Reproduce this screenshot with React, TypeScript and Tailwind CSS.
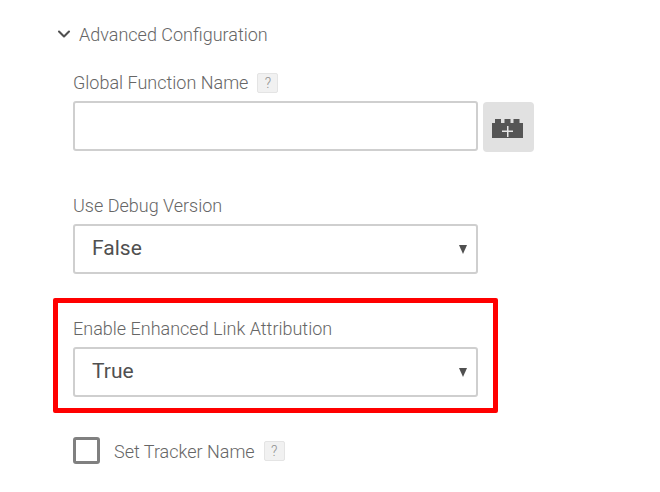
import { ChevronDown } from 'lucide-react';

const HelpBadge = () => (
  <span className="flex h-[20px] w-[21px] items-center justify-center rounded-[2px] border border-[#e4e4e4] bg-[#f1f1f1] text-[14px] font-light leading-none text-[#909090]">
    ?
  </span>
);

const SelectField = ({ label, value }: { label: string; value: string }) => (
  <div className="flex flex-col">
    <label className="h-[24px] pt-px text-[18px] font-light leading-[24px] text-[#666666]">{label}</label>
    <div className="mt-[7px] flex h-[50px] w-[405px] items-center justify-between rounded-[3px] border-2 border-[#cfcfcf] bg-white pb-[1px] pl-[17px] pr-[9px]">
      <span className="text-[21px] text-[#505050]">{value}</span>
      <span className="mt-[1px] h-0 w-0 border-x-[4.5px] border-t-[9px] border-x-transparent border-t-[#505050]" />
    </div>
  </div>
);

export default function App() {
  return (
    <div className="h-[492px] w-[660px] overflow-hidden bg-white pt-[23px] font-['Roboto',sans-serif]">
      <div className="flex h-[24px] items-center pl-[54px]">
        <ChevronDown className="-mt-[2px] h-[20px] w-[20px] text-[#505050]" strokeWidth={2.5} />
        <span className="ml-[5px] text-[18px] font-light leading-[24px] text-[#666666]">Advanced Configuration</span>
      </div>

      <div className="mt-[24px] pl-[73px]">
        <div className="flex h-[24px] items-center gap-[9px]">
          <label className="text-[18px] font-light leading-[24px] text-[#666666]">Global Function Name</label>
          <HelpBadge />
        </div>
        <div className="mt-[6px] flex items-start gap-[5px]">
          <div className="h-[50px] w-[405px] rounded-[3px] border-2 border-[#cfcfcf] bg-white" />
          <button className="mt-px flex h-[50px] w-[51px] items-center justify-center rounded-[4px] bg-[#e1e1e1] pr-[2px] pt-[3px]">
            <svg width="31" height="19" viewBox="0 0 31 19" fill="#555555">
              <path d="M0 4h3V0h6v4h3.500V0h6v4h3V0h6v4h3.500v15H0z" />
              <path d="M15 7h1.500v4.500H21V13h-4.500v5H15v-5h-5v-1.500h5z" fill="#e8e8e8" />
            </svg>
          </button>
        </div>
      </div>

      <div className="mt-[41px] pl-[73px]">
        <SelectField label="Use Debug Version" value="False" />
      </div>

      <div className="ml-[53px] mt-[24px] h-[115px] w-[445px] rounded-[2px] border-[5px] border-[#ff0000] pl-[15px] pt-[13px]">
        <SelectField label="Enable Enhanced Link Attribution" value="True" />
      </div>

      <div className="mt-[24px] flex items-center pl-[73px]">
        <span className="h-[27px] w-[27px] rounded-[3px] border-[3px] border-[#808080] bg-white" />
        <label className="ml-[14px] pt-[2px] text-[18px] font-light leading-[24px] text-[#666666]">Set Tracker Name</label>
        <span className="ml-[9px]">
          <HelpBadge />
        </span>
      </div>
    </div>
  );
}
